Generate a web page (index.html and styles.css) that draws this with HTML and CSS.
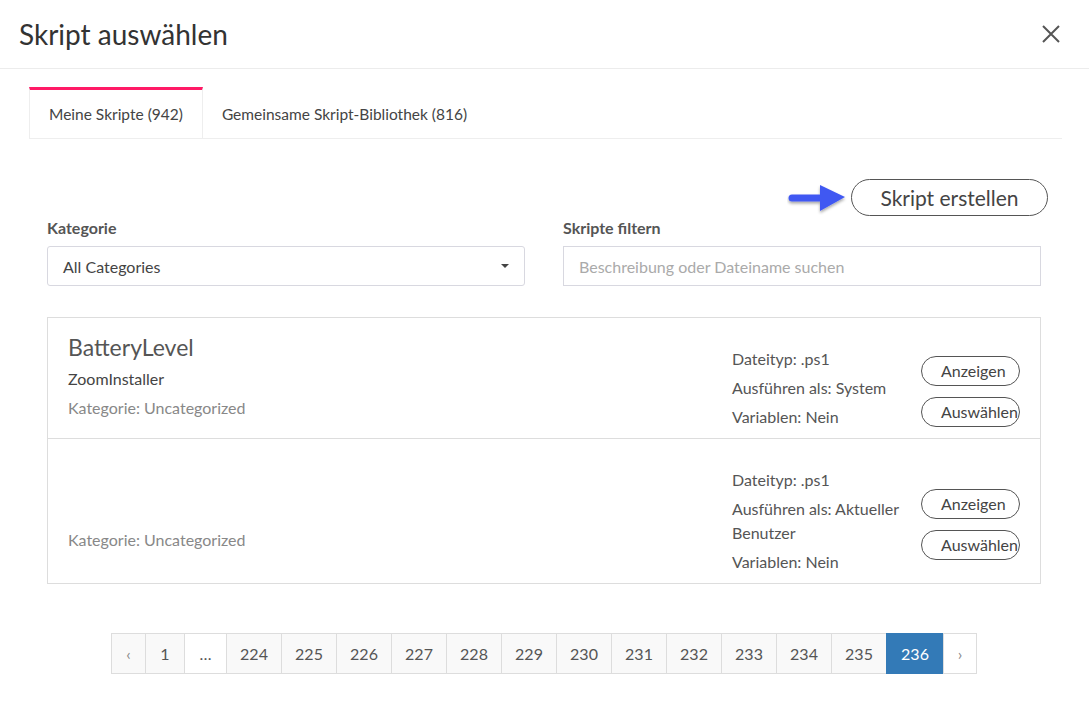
FILE: index.html
```html
<!DOCTYPE html>
<html>
<head>
    <title>Skript auswählen</title>
    <meta charset="UTF-8">
    <meta name="viewport" content="width=device-width, initial-scale=1.0">
    <link rel="stylesheet" href="styles.css">
</head>
<body>
    <header class="modal-header">
        <h1>Skript auswählen</h1>
        <button class="close-btn" aria-label="Schließen">
            <svg width="20" height="20" viewBox="0 0 20 20">
                <path d="M2 2 L18 18 M18 2 L2 18" stroke="#555" stroke-width="2" fill="none"/>
            </svg>
        </button>
    </header>

    <div class="modal-body">
        <ul class="tabs">
            <li class="tab active">Meine Skripte (942)</li>
            <li class="tab">Gemeinsame Skript-Bibliothek (816)</li>
        </ul>

        <div class="tab-pane">
            <div class="toolbar">
                <svg class="arrow" width="62" height="34" viewBox="0 0 62 34">
                    <defs>
                        <filter id="shadow" x="-20%" y="-20%" width="140%" height="160%">
                            <feDropShadow dx="0" dy="2" stdDeviation="1.5" flood-color="#000" flood-opacity="0.35"/>
                        </filter>
                    </defs>
                    <g filter="url(#shadow)">
                        <line x1="5" y1="17" x2="36" y2="17" stroke="#4159f2" stroke-width="7" stroke-linecap="round"/>
                        <path d="M33 4 L58 16 L33 30 Z" fill="#4159f2"/>
                    </g>
                </svg>
                <button class="create-btn">Skript erstellen</button>
            </div>

            <div class="filters">
                <div class="field">
                    <label>Kategorie</label>
                    <div class="select">
                        <span>All Categories</span>
                        <span class="caret"></span>
                    </div>
                </div>
                <div class="field">
                    <label>Skripte filtern</label>
                    <div class="input">Beschreibung oder Dateiname suchen</div>
                </div>
            </div>

            <div class="script-list">
                <div class="script-row">
                    <div class="script-info">
                        <h3>BatteryLevel</h3>
                        <p class="desc">ZoomInstaller</p>
                        <p class="cat">Kategorie: Uncategorized</p>
                    </div>
                    <div class="script-meta">
                        <p>Dateityp: .ps1</p>
                        <p>Ausführen als: System</p>
                        <p>Variablen: Nein</p>
                    </div>
                    <div class="script-actions">
                        <button class="pill-btn">Anzeigen</button>
                        <button class="pill-btn">Auswählen</button>
                    </div>
                </div>
                <div class="script-row">
                    <div class="script-info no-title">
                        <p class="cat">Kategorie: Uncategorized</p>
                    </div>
                    <div class="script-meta">
                        <p>Dateityp: .ps1</p>
                        <p>Ausführen als: Aktueller Benutzer</p>
                        <p>Variablen: Nein</p>
                    </div>
                    <div class="script-actions">
                        <button class="pill-btn">Anzeigen</button>
                        <button class="pill-btn">Auswählen</button>
                    </div>
                </div>
            </div>

            <ul class="pagination">
                <li class="prev">‹</li>
                <li class="first">1</li>
                <li class="gap">…</li>
                <li>224</li>
                <li>225</li>
                <li>226</li>
                <li>227</li>
                <li>228</li>
                <li>229</li>
                <li>230</li>
                <li>231</li>
                <li>232</li>
                <li>233</li>
                <li>234</li>
                <li>235</li>
                <li class="current">236</li>
                <li class="next">›</li>
            </ul>
        </div>
    </div>
</body>
</html>
```

FILE: styles.css
```css
:root {
    --pink: #ff1a66;
    --blue: #337ab7;
    --border: #e3e3e3;
    --text: #444;
}

body {
    margin: 0;
    background: #fff;
    color: var(--text);
    font-family: 'Source Sans Pro', Lato, 'Noto Sans', sans-serif;
    font-size: 16px;
}

.modal-header {
    display: flex;
    justify-content: space-between;
    align-items: center;
    height: 69px;
    padding: 0 28px 0 19px;
    border-bottom: 1px solid #ececec;
    box-sizing: border-box;
}

.modal-header h1 {
    margin: 0;
    font-size: 28px;
    font-weight: 400;
    color: #333;
}

.close-btn {
    background: none;
    border: none;
    padding: 0;
    cursor: pointer;
    display: flex;
}

.modal-body {
    padding: 18px 27px 0 29px;
}

.tabs {
    display: flex;
    list-style: none;
    margin: 0;
    padding: 0;
    border-bottom: 1px solid #eee;
}

.tab {
    padding: 0 19px;
    height: 48px;
    line-height: 48px;
    border-top: 3px solid transparent;
    color: var(--text);
    font-size: 15.5px;
}

.tab.active {
    border-top-color: var(--pink);
    border-left: 1px solid #eee;
    border-right: 1px solid #eee;
    margin-bottom: -1px;
    background: #fff;
}

.tab-pane {
    padding: 0 21px 0 18px;
}

.toolbar {
    display: flex;
    justify-content: flex-end;
    align-items: center;
    gap: 2px;
    margin: 40px -7px 0 0;
}

.create-btn {
    font-family: inherit;
    font-size: 21px;
    color: #444;
    background: #fff;
    border: 1px solid #555;
    border-radius: 20px;
    height: 37px;
    width: 197px;
    cursor: pointer;
}

.filters {
    display: grid;
    grid-template-columns: 1fr 1fr;
    gap: 38px;
    margin-top: 2px;
}

.field label {
    display: block;
    font-weight: 700;
    color: #555;
    margin-bottom: 9px;
}

.select,
.input {
    height: 40px;
    box-sizing: border-box;
    border: 1px solid #d8d8e0;
    padding: 0 15px;
    display: flex;
    align-items: center;
}

.select {
    justify-content: space-between;
    border-radius: 3px;
}

.caret {
    width: 0;
    height: 0;
    border-left: 4px solid transparent;
    border-right: 4px solid transparent;
    border-top: 4px solid #444;
}

.input {
    color: #aaa;
}

.script-list {
    margin-top: 31px;
    border: 1px solid #ddd;
}

.script-row {
    display: flex;
    align-items: center;
    padding: 0 20px;
    border-bottom: 1px solid #ddd;
}

.script-row:last-child {
    border-bottom: none;
}

.script-info {
    flex: 1;
    align-self: flex-start;
    padding-top: 16px;
}

.script-info.no-title {
    padding-top: 89px;
}

.script-info h3 {
    margin: 0;
    font-size: 23px;
    font-weight: 400;
    line-height: 26px;
    color: #555;
}

.script-info p {
    margin: 7px 0 0;
    line-height: 24px;
}

.script-info .cat {
    margin-top: 5px;
    color: #888;
}

.script-info.no-title .cat {
    margin-top: 0;
}

.script-meta {
    width: 189px;
    padding: 29px 0 9px;
    color: #555;
}

.script-meta p {
    margin: 0 0 5px;
    line-height: 24px;
}

.script-meta p:last-child {
    margin-bottom: 0;
}

.script-actions {
    display: flex;
    flex-direction: column;
    gap: 11px;
    padding-top: 26px;
}

.pill-btn {
    width: 99px;
    height: 30px;
    font-family: inherit;
    font-size: 16px;
    color: #444;
    background: #fff;
    border: 1px solid #555;
    border-radius: 15px;
    padding: 0 0 0 19px;
    text-align: left;
    white-space: nowrap;
    overflow: hidden;
    cursor: pointer;
}

.pagination {
    display: flex;
    justify-content: center;
    list-style: none;
    margin: 49px 0 0;
    padding: 0;
}

.pagination li {
    height: 41px;
    line-height: 39px;
    box-sizing: border-box;
    width: 56px;
    text-align: center;
    border: 1px solid #ddd;
    margin-left: -1px;
    background: #f9f9f9;
    color: #555;
    font-size: 16px;
}

.pagination .prev {
    width: 35px;
    margin-left: 0;
    color: #888;
}

.pagination .first {
    width: 40px;
}

.pagination .gap {
    width: 43px;
    background: #fff;
}

.pagination .current {
    background: var(--blue);
    border-color: var(--blue);
    color: #fff;
    width: 58px;
}

.pagination .next {
    width: 34px;
    background: #fff;
    color: #888;
}
```
